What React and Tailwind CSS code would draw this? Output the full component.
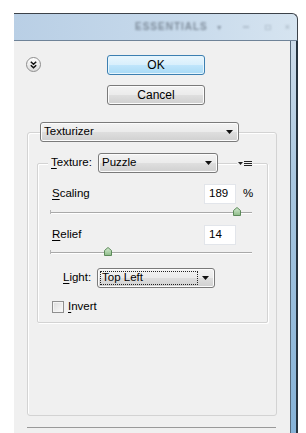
import React from 'react';

const grayBtn =
  'bg-[linear-gradient(to_bottom,#f3f3f3_0%,#ebebeb_48%,#dedede_52%,#d0d0d0_100%)] border border-[#7a7a7a] rounded-[3px] shadow-[inset_0_0_0_1px_#fcfcfc]';

function Arrow() {
  return (
    <svg width="7" height="4" viewBox="0 0 7 4" className="shrink-0">
      <path d="M0 0 H7 L3.5 4 Z" fill="#111" />
    </svg>
  );
}

function Thumb() {
  return (
    <svg width="8" height="9" viewBox="0 0 8 9">
      <defs>
        <linearGradient id="tg" x1="0" y1="0" x2="0" y2="1">
          <stop offset="0" stopColor="#d6ecd2" />
          <stop offset="1" stopColor="#8dbb88" />
        </linearGradient>
      </defs>
      <path d="M4 0.5 L7.5 3.5 V8.5 H0.5 V3.5 Z" fill="url(#tg)" stroke="#5d8a5a" />
    </svg>
  );
}

function Slider({ at }) {
  return (
    <div className="relative h-[13px] ml-[12px] w-[202px] flex items-center">
      <div className="w-full h-[2px] border-t border-[#a9a9a9] border-b border-b-white" />
      <div className="absolute left-0 top-[4px] w-[1px] h-[4px] bg-[#b5b5b5]" />
      <div className="absolute top-[1px]" style={{ left: at }}>
        <Thumb />
      </div>
    </div>
  );
}

function Field({ value }) {
  return (
    <div className="w-[32px] h-[20px] bg-white border border-[#e2e5ea] flex items-center pl-[4px]">
      {value}
    </div>
  );
}

export default function App() {
  return (
    <div className="w-[306px] h-[433px] bg-white overflow-hidden font-['Liberation_Sans',Arial,sans-serif] text-[11.5px] text-black leading-none">
      <div className="ml-[14px] mt-[13px] w-[284px] h-[420px] flex flex-col">
        {/* title bar */}
        <div className="h-[28px] shrink-0 border-t border-r border-[#3c4249] border-b border-b-[#6f8398] rounded-tr-[6px] bg-[linear-gradient(to_right,#b9cfe5,#c6d9eb_55%,#d6e4f0)] flex items-center pl-[121px] text-[#6c7987]">
          <span className="text-[10px] font-bold tracking-[1px] blur-[1.3px] opacity-80">ESSENTIALS</span>
          <span className="ml-[8px] text-[7px] blur-[1px] opacity-70">▼</span>
          <span className="ml-[20px] w-[6px] h-[2px] bg-[#9aa8b6] blur-[0.8px] opacity-60" />
          <span className="ml-[16px] w-[6px] h-[5px] border border-[#9aa8b6] blur-[0.8px] opacity-60" />
          <span className="ml-[14px] text-[9px] blur-[0.8px] opacity-50">×</span>
        </div>

        <div className="flex flex-1">
          {/* client area */}
          <div className="w-[276px] bg-[#f0f0f0] flex flex-col">
            <div className="flex pl-[12px] pt-[14px]">
              <div className="mt-[2px] w-[15px] h-[15px] rounded-full border border-[#8e8e8e] bg-[linear-gradient(to_bottom,#ffffff,#dcdcdc)] flex items-center justify-center">
                <svg width="7" height="8" viewBox="0 0 7 8">
                  <path d="M0.8 0.8 L3.5 3.3 L6.2 0.8 M0.8 4.3 L3.5 6.8 L6.2 4.3" fill="none" stroke="#111" strokeWidth="1.5" />
                </svg>
              </div>
              <div className="ml-[66px] flex flex-col">
                <div className="w-[98px] h-[20px] rounded-[3px] border border-[#3c7fb1] bg-[linear-gradient(to_bottom,#e9f6fd_0%,#d8effc_48%,#bfe5fb_52%,#a9daf5_100%)] shadow-[inset_0_0_0_1px_#e6f5fd] flex items-center justify-center text-[12px]">
                  OK
                </div>
                <div className={`mt-[10px] w-[98px] h-[20px] ${grayBtn} flex items-center justify-center text-[12px]`}>
                  Cancel
                </div>
              </div>
            </div>

            {/* effect panel */}
            <div className="mt-[27px] ml-[13px] w-[250px] h-[284px] shrink-0 border border-[#d3d3d3] rounded-[3px] shadow-[inset_1px_1px_0_#ffffff] flex flex-col">
              <div className={`-mt-[11px] ml-[12px] w-[199px] h-[20px] ${grayBtn} flex items-center justify-between pl-[3px] pr-[5px]`}>
                <span>Texturizer</span>
                <Arrow />
              </div>

              <div className="mt-[21px] ml-[9px] w-[231px] h-[160px] shrink-0 border border-[#d3d3d3] rounded-[2px] shadow-[inset_1px_1px_0_#ffffff,1px_1px_0_#ffffff] flex flex-col">
                <div className="-mt-[11px] h-[20px] flex items-center">
                  <div className="ml-[10px] w-[50px] h-full bg-[#f0f0f0] flex items-center pl-[3px]">
                    <span><u className="underline-offset-2">T</u>exture:</span>
                  </div>
                  <div className={`w-[120px] h-[20px] ${grayBtn} flex items-center justify-between pl-[3px] pr-[5px]`}>
                    <span>Puzzle</span>
                    <Arrow />
                  </div>
                  <div className="ml-[19px] w-[16px] h-full bg-[#f0f0f0] flex items-center justify-center">
                    <svg width="14" height="7" viewBox="0 0 14 7">
                      <path d="M0 2 H5 L2.5 5 Z" fill="#222" />
                      <path d="M6 1.5 H14 M6 3.5 H14 M6 5.5 H14" stroke="#222" strokeWidth="1" />
                    </svg>
                  </div>
                </div>

                <div className="mt-[11px] h-[20px] flex items-center">
                  <span className="ml-[14px] w-[152px]"><u className="underline-offset-2">S</u>caling</span>
                  <Field value="189" />
                  <span className="ml-[7px]">%</span>
                </div>
                <div className="mt-[2px]">
                  <Slider at={183} />
                </div>

                <div className="mt-[6px] h-[20px] flex items-center">
                  <span className="ml-[14px] w-[152px]"><u className="underline-offset-2">R</u>elief</span>
                  <Field value="14" />
                </div>
                <div className="mt-[1px]">
                  <Slider at={54} />
                </div>

                <div className="mt-[9px] h-[20px] flex items-center">
                  <span className="ml-[25px] w-[34px]"><u className="underline-offset-2">L</u>ight:</span>
                  <div className={`w-[118px] h-[20px] ${grayBtn} flex items-center justify-between pl-[2px] pr-[5px]`}>
                    <span className="w-[98px] h-[14px] border border-dotted border-[#222] flex items-center pl-[1px]">Top Left</span>
                    <Arrow />
                  </div>
                </div>

                <div className="mt-[12px] h-[14px] flex items-center">
                  <div className="ml-[14px] w-[12px] h-[12px] border border-[#8f8f8f] bg-[linear-gradient(to_bottom_right,#dcdcdc,#fafafa)] shadow-[inset_0_0_0_1px_#f4f4f4]" />
                  <span className="ml-[4px]"><u className="underline-offset-2">I</u>nvert</span>
                </div>
              </div>
            </div>

            <div className="mt-[11px] ml-[13px] w-[249px] h-[1px] shrink-0 bg-[#999999]" />
          </div>

          {/* right frame */}
          <div className="w-[8px] flex">
            <div className="w-[1px] bg-[#55687a]" />
            <div className="w-[5px] bg-[linear-gradient(to_bottom,#cddcea,#a9c7e0_35%,#86b3d8)]" />
            <div className="w-[2px] bg-[#25323e]" />
          </div>
        </div>
      </div>
    </div>
  );
}
